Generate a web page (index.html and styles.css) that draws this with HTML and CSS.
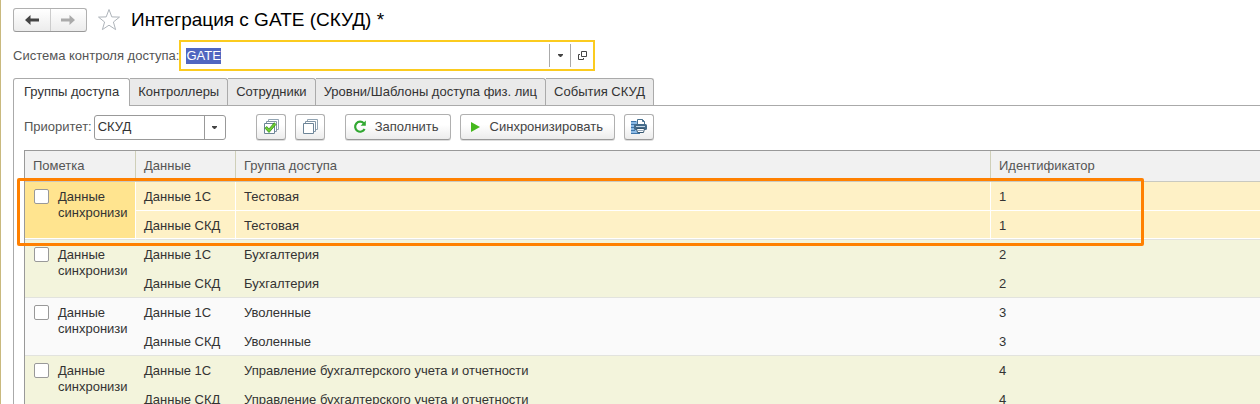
FILE: index.html
```html
<!DOCTYPE html>
<html lang="ru">
<head>
  <meta charset="UTF-8">
  <title>Интеграция с GATE (СКУД)</title>
  <link rel="stylesheet" href="styles.css">
</head>
<body>
  <div class="window">
    <div class="header">
      <div class="nav">
        <button type="button" class="nav-btn" aria-label="Назад">
          <svg width="14" height="10" viewBox="0 0 14 10"><path d="M5.500 0v3.600H14v2.800H5.500V10L0 5z" fill="#444"/></svg>
        </button>
        <button type="button" class="nav-btn" aria-label="Вперед">
          <svg width="14" height="10" viewBox="0 0 14 10"><path d="M8.500 0v3.600H0v2.800h8.500V10L14 5z" fill="#aaa"/></svg>
        </button>
      </div>
      <svg class="star" width="24" height="24" viewBox="0 0 24 24"><path d="M12 1.500l2.800 7.400 7.700.2-6.100 4.900 2.200 7.600-6.600-4.400-6.600 4.400 2.200-7.600-6.100-4.900 7.700-.2z" fill="#fff" stroke="#aeb4ba" stroke-width="1"/></svg>
      <h1>Интеграция с GATE (СКУД) *</h1>
    </div>

    <div class="system">
      <label for="system">Система контроля доступа:</label>
      <div class="combo">
        <input type="text" id="system" value="GATE">
        <button type="button" class="combo-btn" aria-label="Выбрать">
          <svg width="5" height="3" viewBox="0 0 5 3"><path d="M0 0h5v1L3 3H2L0 1z" fill="#444"/></svg>
        </button>
        <button type="button" class="combo-btn" aria-label="Открыть">
          <svg width="9" height="9" viewBox="0 0 9 9" fill="none" stroke="#444"><path d="M3.500.5h5v5h-5z"/><path d="M2 3.500H.5v5h5V7"/></svg>
        </button>
      </div>
    </div>

    <div class="tabs" role="tablist">
      <button type="button" class="tab active" role="tab">Группы доступа</button>
      <button type="button" class="tab" role="tab">Контроллеры</button>
      <button type="button" class="tab" role="tab">Сотрудники</button>
      <button type="button" class="tab" role="tab">Уровни/Шаблоны доступа физ. лиц</button>
      <button type="button" class="tab" role="tab">События СКУД</button>
    </div>

    <div class="panel">
      <div class="toolbar">
        <label for="priority">Приоритет:</label>
        <div class="select">
          <select id="priority">
            <option>СКУД</option>
          </select>
          <span class="select-arrow">
            <svg width="5" height="3" viewBox="0 0 5 3"><path d="M0 0h5v1L3 3H2L0 1z" fill="#444"/></svg>
          </span>
        </div>

        <div class="tools">
          <button type="button" class="btn icon-btn" aria-label="Установить флажки">
            <svg width="16" height="16" viewBox="0 0 16 16" fill="#fff" stroke="#6c8497">
              <path d="M5.500.5h10v10h-10z" stroke="#93a5b3"/><path d="M3.500 2.500h10v10h-10z" stroke="#8296a6"/><path d="M1.500 4.500h10v10h-10z"/>
              <path d="M2 9.200l1.700-1.700 2.300 2.400 5.300-6.200 1.600 1.800-6.900 8z" fill="#6fd02f" stroke="#2c8a17" stroke-width=".8"/>
            </svg>
          </button>
          <button type="button" class="btn icon-btn" aria-label="Снять флажки">
            <svg width="16" height="16" viewBox="0 0 16 16" fill="#fff" stroke="#6c8497">
              <path d="M5.500.5h10v10h-10z" stroke="#93a5b3"/><path d="M3.500 2.500h10v10h-10z" stroke="#8296a6"/><path d="M1.500 4.500h10v10h-10z"/>
            </svg>
          </button>
        </div>

        <button type="button" class="btn">
          <svg width="14" height="14" viewBox="0 0 14 14"><path d="M10.800 3.300A5 5 0 1 0 11.600 9" fill="none" stroke="#32a832" stroke-width="2.200"/><path d="M12.800.6v5.200H7.600z" fill="#32a832"/></svg>
          Заполнить
        </button>
        <button type="button" class="btn">
          <svg width="14" height="14" viewBox="0 0 14 14"><path d="M3 2l9 5-9 5z" fill="#44b81c"/></svg>
          Синхронизировать
        </button>
        <button type="button" class="btn icon-btn" aria-label="Печать">
          <svg width="18" height="16" viewBox="0 0 18 16">
            <path d="M1 2h9v13H1z" fill="#8dbbe6"/>
            <path d="M1 2.500h5M1 5.500h4M1 8.500h3M1 11.500h4M1 14.500h9" stroke="#3f76aa"/>
            <path d="M7.500 6V.5h5l2 2V6z" fill="#fff" stroke="#48718f"/>
            <path d="M12.500.5v2h2" fill="none" stroke="#48718f"/>
            <rect x="4" y="5" width="13" height="6" rx="1.500" fill="#456b8a"/>
            <path d="M6 7.500h9" stroke="#c4d7e6"/>
            <path d="M6.500 9.500h8l-1 4h-6z" fill="#fff" stroke="#36566f"/>
            <path d="M8 11.500h5" stroke="#9ab"/>
          </svg>
        </button>
      </div>

      <div class="grid">
        <table>
          <colgroup>
            <col class="col-mark">
            <col class="col-data">
            <col>
            <col class="col-id">
          </colgroup>
          <thead>
            <tr><th>Пометка</th><th>Данные</th><th>Группа доступа</th><th>Идентификатор</th></tr>
          </thead>
          <tbody class="selected">
            <tr>
              <td rowspan="2" class="mark"><label><input type="checkbox"><span>Данные синхронизи</span></label></td>
              <td>Данные 1С</td><td>Тестовая</td><td>1</td>
            </tr>
            <tr><td>Данные СКД</td><td>Тестовая</td><td>1</td></tr>
          </tbody>
          <tbody class="odd">
            <tr>
              <td rowspan="2" class="mark"><label><input type="checkbox"><span>Данные синхронизи</span></label></td>
              <td>Данные 1С</td><td>Бухгалтерия</td><td>2</td>
            </tr>
            <tr><td>Данные СКД</td><td>Бухгалтерия</td><td>2</td></tr>
          </tbody>
          <tbody>
            <tr>
              <td rowspan="2" class="mark"><label><input type="checkbox"><span>Данные синхронизи</span></label></td>
              <td>Данные 1С</td><td>Уволенные</td><td>3</td>
            </tr>
            <tr><td>Данные СКД</td><td>Уволенные</td><td>3</td></tr>
          </tbody>
          <tbody class="odd">
            <tr>
              <td rowspan="2" class="mark"><label><input type="checkbox"><span>Данные синхронизи</span></label></td>
              <td>Данные 1С</td><td>Управление бухгалтерского учета и отчетности</td><td>4</td>
            </tr>
            <tr><td>Данные СКД</td><td>Управление бухгалтерского учета и отчетности</td><td>4</td></tr>
          </tbody>
        </table>
        <div class="highlight"></div>
      </div>
    </div>
  </div>

  <script src="form.js"></script>
</body>
</html>
```
FILE: form.js
```js
// Put the focus in the main field, with its value selected
var system = document.getElementById('system');
system.focus();
system.select();
```
FILE: styles.css
```css
* {
  box-sizing: border-box;
}

body {
  margin: 0;
  background: #fff;
  color: #333;
}

body,
button,
input,
select {
  font-family: "Liberation Sans", Arial, sans-serif;
  font-size: 13px;
  line-height: 16px;
}

.window {
  height: 100vh;
  overflow: hidden;
  padding: 8px 0 0 12px;
  border-left: 1px solid #c9b97e;
}

label {
  color: #555;
}

.header {
  display: flex;
  align-items: center;
  height: 24px;
}

h1 {
  margin: 0 0 0 10px;
  font-size: 19px;
  font-weight: normal;
  line-height: 24px;
  color: #000;
}

.star {
  margin-left: 10px;
}

.nav {
  display: flex;
  width: 74px;
  height: 24px;
  border: 1px solid #b0b0b0;
  border-bottom-color: #999;
  border-radius: 3px;
  background: linear-gradient(#fff, #ececec);
}

.nav-btn {
  display: flex;
  flex: 1;
  align-items: center;
  justify-content: center;
  padding: 0;
  border: 0;
  background: none;
}

.nav-btn + .nav-btn {
  border-left: 1px solid #ccc;
}

.system {
  display: flex;
  align-items: center;
  margin-top: 8px;
}

.combo {
  display: flex;
  width: 416px;
  height: 31px;
  padding: 2px 0;
  border: 2px solid #fbcb1f;
}

.combo input {
  flex: 1;
  min-width: 0;
  padding: 0 5px;
  border: 0;
  outline: 0;
  background: none;
}

.combo input::selection {
  background: #5066c0;
  color: #fff;
}

.combo-btn {
  display: flex;
  align-items: center;
  justify-content: center;
  width: 21px;
  padding: 0;
  border: 0;
  border-left: 1px solid #aaa;
  background: none;
}

.combo-btn:last-child {
  width: 23px;
}

.tabs {
  display: flex;
  margin-top: 7px;
  border-bottom: 1px solid #aaa;
}

.tab {
  height: 27px;
  padding: 0 8px;
  border: 1px solid #aaa;
  border-bottom: 0;
  border-left: 0;
  border-radius: 0 3px 0 0;
  background: #eaeaea;
  color: #333;
}

.tab.active {
  height: 28px;
  margin-bottom: -1px;
  padding: 0 10px 1px;
  border-left: 1px solid #aaa;
  border-radius: 3px 3px 0 0;
  background: #fff;
}

.panel {
  padding: 8px 0 0 10px;
  border-left: 1px solid #aaa;
}

.toolbar {
  display: flex;
  align-items: center;
  gap: 9px;
}

.toolbar label {
  margin-right: -7px;
}

.select {
  position: relative;
  width: 132px;
  height: 25px;
}

.select select {
  width: 100%;
  height: 100%;
  padding: 0 24px 0 3px;
  border: 1px solid #999;
  border-radius: 3px;
  appearance: none;
  background: #fff;
  color: #333;
}

.select-arrow {
  position: absolute;
  top: 1px;
  right: 1px;
  bottom: 1px;
  display: flex;
  align-items: center;
  justify-content: center;
  width: 21px;
  border-left: 1px solid #999;
  pointer-events: none;
}

.tools {
  display: flex;
  gap: 9px;
  margin: 0 11px 0 21px;
}

.btn {
  display: flex;
  align-items: center;
  gap: 8px;
  height: 26px;
  padding: 0 11px 0 7px;
  border: 1px solid #b0b0b0;
  border-bottom-color: #999;
  border-radius: 3px;
  background: linear-gradient(#fff 40%, #ececec);
  box-shadow: 0 1px 0 #ddd;
  color: #444;
}

.icon-btn {
  justify-content: center;
  width: 30px;
  padding: 0;
}

.grid {
  position: relative;
  margin-top: 10px;
  border: 1px solid #999;
  border-right: 0;
}

table {
  width: 100%;
  table-layout: fixed;
  border-spacing: 0;
}

.col-mark {
  width: 111px;
}

.col-data {
  width: 100px;
}

.col-id {
  width: 269px;
}

th {
  height: 31px;
  padding: 0 8px;
  border-right: 1px solid #cfcfb8;
  border-bottom: 1px solid #c9c9c0;
  background: #f1f1f1;
  font-weight: normal;
  text-align: left;
  color: #555;
}

th:last-child,
.selected td:last-child {
  border-right: 0;
}

td {
  height: 29px;
  padding: 7px 8px 5px;
  background: #fafafa;
  vertical-align: top;
}

.odd td {
  background: #f3f4dc;
}

td.mark,
tr:last-child td {
  border-bottom: 1px solid #e2e3de;
}

.mark label {
  display: flex;
  gap: 9px;
  color: #333;
}

.mark input {
  flex: none;
  width: 15px;
  height: 15px;
  margin: 0 0 0 1px;
  border: 1px solid #999;
  border-radius: 2px;
  appearance: none;
  background: #fff;
}

.selected td {
  border-right: 1px solid #fff;
  background: #fef1c6;
  box-shadow: inset 0 -1px #fff;
}

.selected td.mark {
  background: #ffe48f;
}

/* frame around the selected record */
.highlight {
  position: absolute;
  top: 27px;
  right: 116px;
  left: -8px;
  height: 68px;
  border: 3px solid #ff8000;
  border-radius: 2px;
  pointer-events: none;
}
```
